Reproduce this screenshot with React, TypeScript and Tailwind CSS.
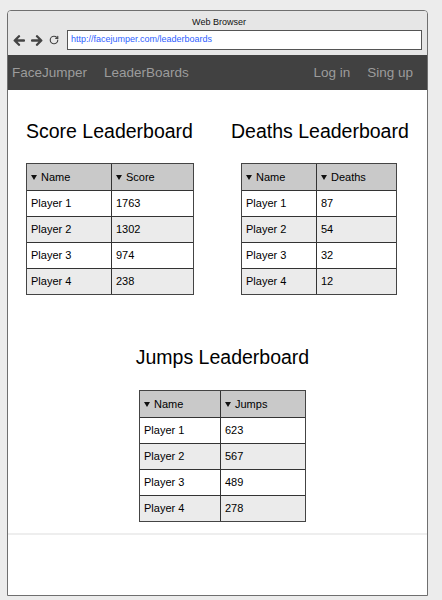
import { RotateCw } from "lucide-react";

type Row = { name: string; value: number };

type Board = {
  title: string;
  column: string;
  widths: [number, number];
  rows: Row[];
};

const score: Board = {
  title: "Score Leaderboard",
  column: "Score",
  widths: [85, 83],
  rows: [
    { name: "Player 1", value: 1763 },
    { name: "Player 2", value: 1302 },
    { name: "Player 3", value: 974 },
    { name: "Player 4", value: 238 },
  ],
};

const deaths: Board = {
  title: "Deaths Leaderboard",
  column: "Deaths",
  widths: [75, 81],
  rows: [
    { name: "Player 1", value: 87 },
    { name: "Player 2", value: 54 },
    { name: "Player 3", value: 32 },
    { name: "Player 4", value: 12 },
  ],
};

const jumps: Board = {
  title: "Jumps Leaderboard",
  column: "Jumps",
  widths: [81, 86],
  rows: [
    { name: "Player 1", value: 623 },
    { name: "Player 2", value: 567 },
    { name: "Player 3", value: 489 },
    { name: "Player 4", value: 278 },
  ],
};

function SortArrow() {
  return (
    <svg width="6" height="5" viewBox="0 0 6 5" className="mr-[4px] shrink-0">
      <polygon points="0,0 6,0 3,5" fill="#111" />
    </svg>
  );
}

// thick arrow used in the browser toolbar
function NavArrow({ flip }: { flip?: boolean }) {
  return (
    <svg
      width="12"
      height="11"
      viewBox="0 0 12 11"
      className={flip ? "-scale-x-100" : ""}
    >
      <path
        d="M11 5.5H2M6 1.2L1.7 5.5 6 9.8"
        fill="none"
        stroke="#444"
        strokeWidth="2.3"
        strokeLinecap="round"
        strokeLinejoin="round"
      />
    </svg>
  );
}

function BoardTable({ board }: { board: Board }) {
  const [w1, w2] = board.widths;
  return (
    <div
      className="border border-[#444] text-[11px] text-black"
      style={{ width: w1 + w2 }}
    >
      <div className="flex h-[26px] bg-[#c9c9c9]">
        <div className="flex items-center pl-[4px] border-r border-[#333]" style={{ width: w1 }}>
          <SortArrow />
          Name
        </div>
        <div className="flex items-center pl-[4px] flex-1">
          <SortArrow />
          {board.column}
        </div>
      </div>
      {board.rows.map((r, i) => (
        <div
          key={r.name}
          className={
            "flex h-[26px] border-t border-[#333] " +
            (i % 2 === 1 ? "bg-[#ebebeb]" : "bg-white")
          }
        >
          <div className="flex items-center pl-[4px] border-r border-[#333]" style={{ width: w1 }}>
            {r.name}
          </div>
          <div className="flex items-center pl-[4px] flex-1">{r.value}</div>
        </div>
      ))}
    </div>
  );
}

function Heading({ children }: { children: string }) {
  return <h2 className="text-[19.5px] leading-[24px] text-black whitespace-nowrap">{children}</h2>;
}

export default function App() {
  return (
    <div className="w-[442px] h-[600px] bg-[#ececec] pt-[10px] pl-[7px] font-['Liberation_Sans',Arial,sans-serif]">
      <div className="w-[421px] h-[586px] border border-[#6f6f6f] rounded-t-[4px] bg-white flex flex-col overflow-hidden">
        {/* browser chrome */}
        <div className="bg-[#e6e6e6]">
          <div className="pt-[6px] text-[9px] leading-[10px] text-center text-[#111] pl-[3px]">
            Web Browser
          </div>
          <div className="mt-[3px] mb-[5px] flex items-center h-[20px]">
            <div className="ml-[5px]">
              <NavArrow />
            </div>
            <div className="ml-[6px]">
              <NavArrow flip />
            </div>
            <RotateCw size={10} strokeWidth={2.8} className="ml-[6px] text-[#444]" />
            <div className="ml-[8px] mr-[5px] flex-1 h-[20px] border border-[#555] bg-white flex items-center pl-[3px] text-[9px] text-[#2f5fff]">
              http://facejumper.com/leaderboards
            </div>
          </div>
        </div>

        {/* nav */}
        <div className="h-[35px] bg-[#414141] flex items-center pt-[2px] pl-[4px] pr-[14px] text-[13.5px] text-[#9c9c9c]">
          <span>FaceJumper</span>
          <span className="ml-[17px]">LeaderBoards</span>
          <span className="ml-auto">Log in</span>
          <span className="ml-[17px]">Sing up</span>
        </div>

        {/* content */}
        <div className="flex-1 flex flex-col pt-[29px]">
          <div className="flex">
            <div className="w-[205px] pl-[18px]">
              <Heading>{score.title}</Heading>
              <div className="mt-[20px]">
                <BoardTable board={score} />
              </div>
            </div>
            <div className="pl-[18px]">
              <Heading>{deaths.title}</Heading>
              <div className="mt-[20px] ml-[10px]">
                <BoardTable board={deaths} />
              </div>
            </div>
          </div>

          <div className="mt-[50px] pl-[10px] flex flex-col items-center">
            <Heading>{jumps.title}</Heading>
            <div className="mt-[21px]">
              <BoardTable board={jumps} />
            </div>
          </div>

          <div className="mt-[11px] h-[2px] bg-[#eeeeee]" />
        </div>
      </div>
    </div>
  );
}
